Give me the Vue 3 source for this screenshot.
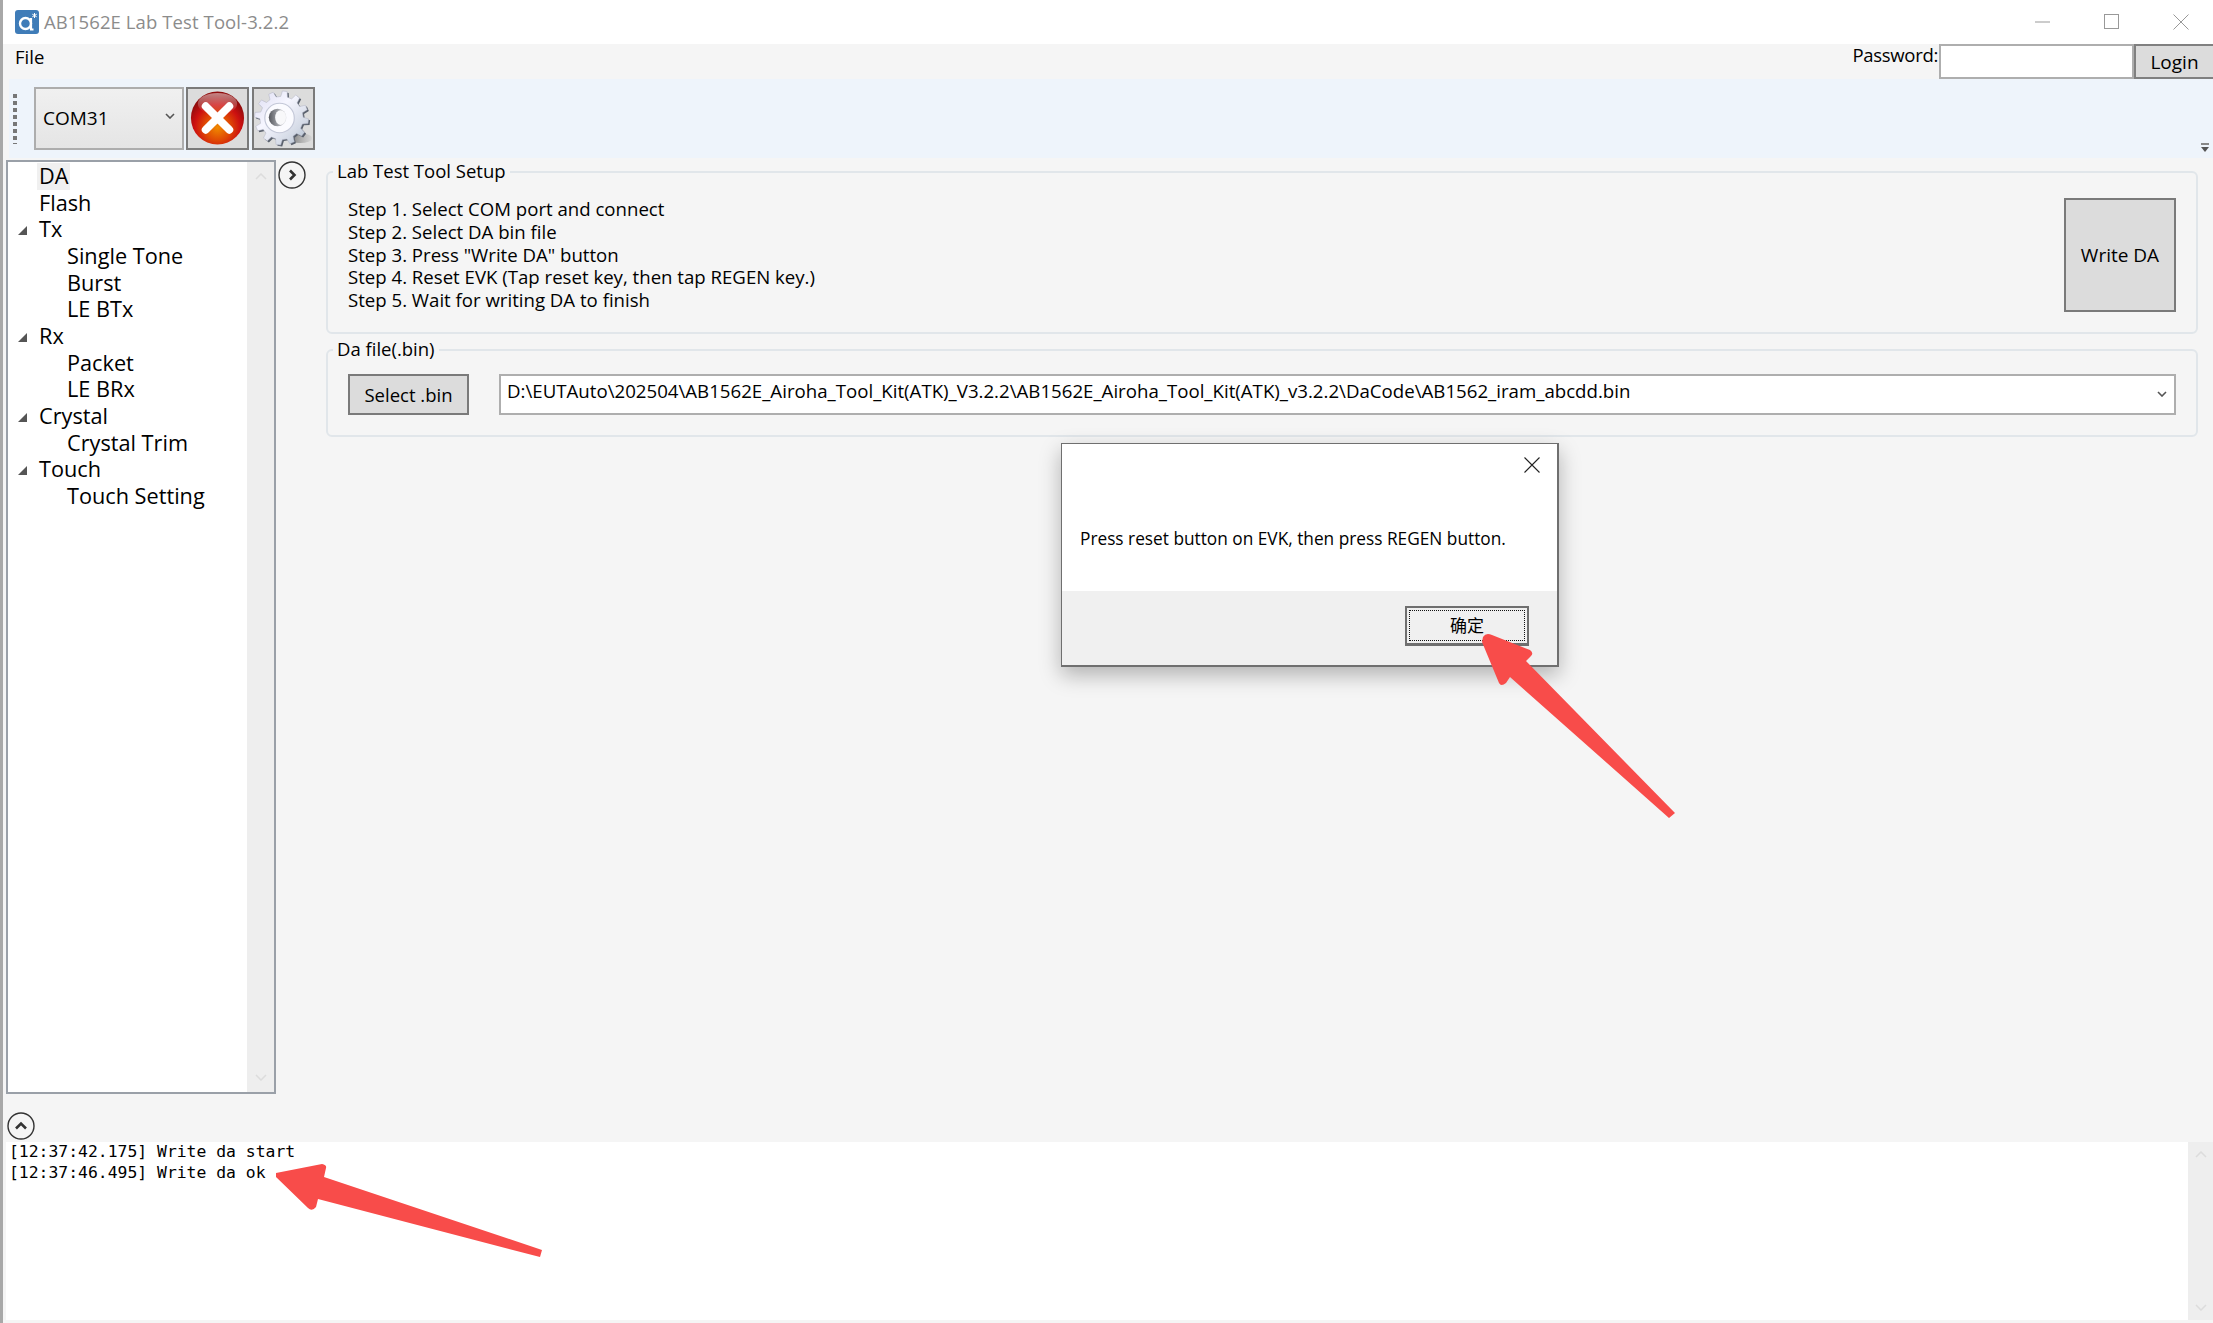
<template>
  <div class="window">
    <div class="titlebar">
      <svg class="app-icon" viewBox="0 0 24 24">
        <rect width="24" height="24" rx="3" fill="#3f7cb8" />
        <circle cx="10.5" cy="13.5" r="5.5" fill="none" stroke="#fff" stroke-width="2.4" />
        <path d="M16 8v11.5h2.5" fill="none" stroke="#fff" stroke-width="2.2" />
        <path d="M19.5 3v5M17.3 4.2l4.4 2.6M21.7 4.2l-4.4 2.6" stroke="#fff" stroke-width="1" />
      </svg>
      <span class="title">AB1562E Lab Test Tool-3.2.2</span>
      <div class="win-controls">
        <svg viewBox="0 0 16 16"><path d="M0 8h15" stroke="#999" /></svg>
        <svg viewBox="0 0 16 16"><rect x=".5" y=".5" width="14" height="14" fill="none" stroke="#999" /></svg>
        <svg viewBox="0 0 16 16"><path d="M.5.5l15 15M15.5.5l-15 15" stroke="#999" /></svg>
      </div>
    </div>

    <div class="menubar">
      <span class="menu-item">File</span>
      <div class="login">
        <span class="pw-label">Password:</span>
        <div class="pw-input"></div>
        <div class="login-btn">Login</div>
      </div>
    </div>

    <div class="toolbar">
      <div class="grip"></div>
      <div class="com-select">
        <span>COM31</span>
        <svg class="chev" viewBox="0 0 10 6"><path d="M1 1l4 4 4-4" fill="none" stroke="#555" stroke-width="1.6" /></svg>
      </div>
      <div class="tool-btn">
        <svg viewBox="0 0 60 60" width="59" height="59">
          <defs>
            <radialGradient id="redBall" cx="50%" cy="68%" r="60%">
              <stop offset="0" stop-color="#f08a00" />
              <stop offset=".4" stop-color="#e04a04" />
              <stop offset=".72" stop-color="#cc1010" />
              <stop offset="1" stop-color="#8f0c0c" />
            </radialGradient>
            <linearGradient id="ballGloss" x1="0" y1="0" x2="0" y2="1">
              <stop offset="0" stop-color="#fff" stop-opacity=".5" />
              <stop offset="1" stop-color="#fff" stop-opacity="0" />
            </linearGradient>
          </defs>
          <circle cx="30" cy="29.5" r="27" fill="url(#redBall)" />
          <ellipse cx="30" cy="15" rx="20" ry="11" fill="url(#ballGloss)" />
          <path d="M18 17.5l24 24M42 17.5l-24 24" stroke="#fff" stroke-width="8" stroke-linecap="round" />
        </svg>
      </div>
      <div class="tool-btn gear-btn">
        <svg viewBox="0 0 60 60" width="59" height="59">
          <defs>
            <linearGradient id="gearFill" x1="0" y1="0" x2="1" y2="1">
              <stop offset="0" stop-color="#dcdcf2" />
              <stop offset=".4" stop-color="#f6f6ff" />
              <stop offset=".75" stop-color="#d4dae6" />
              <stop offset="1" stop-color="#a4b6c6" />
            </linearGradient>
            <linearGradient id="gearHole" x1="0" y1="0" x2="1" y2="0">
              <stop offset="0" stop-color="#56585e" />
              <stop offset=".55" stop-color="#a4a6ac" />
              <stop offset="1" stop-color="#e4e4e8" />
            </linearGradient>
            <linearGradient id="gearShadow" x1="0" y1="0" x2="1" y2="0">
              <stop offset="0" stop-color="#555" stop-opacity=".8" />
              <stop offset="1" stop-color="#888" stop-opacity=".1" />
            </linearGradient>
          </defs>
          <ellipse cx="47" cy="50" rx="12" ry="5" fill="url(#gearShadow)" />
          <polygon :points="gearPoints" fill="#59606c" transform="translate(1.6 1.4)" />
          <polygon :points="gearPoints" fill="url(#gearFill)" stroke="#b0b2c4" stroke-width=".5" />
          <circle cx="26" cy="29.5" r="15" fill="#fbfbff" />
          <circle cx="26" cy="29.5" r="15" fill="none" stroke="#c4c8d8" stroke-width="1.2" />
          <circle cx="24" cy="29" r="9" fill="url(#gearHole)" />
          <ellipse cx="27" cy="29" rx="5.5" ry="7.5" fill="#f8f8fa" />
        </svg>
      </div>
      <svg class="overflow-mark" viewBox="0 0 8 9">
        <path d="M0 0h8v2H0z" fill="#888" />
        <path d="M0 4h8L4 9z" fill="#555" />
      </svg>
    </div>

    <div class="main">
      <div class="tree">
        <div class="tree-list">
          <div
            v-for="item in treeItems"
            :key="item.label"
            class="tree-row"
            :class="{ child: item.child }"
          >
            <span v-if="item.parent" class="tree-arrow"></span>
            <span class="tree-label" :class="{ selected: item.selected }">{{ item.label }}</span>
          </div>
        </div>
        <div class="tree-scroll">
          <svg viewBox="0 0 12 7"><path d="M1 6l5-5 5 5" fill="none" stroke="#dcdcdc" stroke-width="1.5" /></svg>
          <svg viewBox="0 0 12 7"><path d="M1 1l5 5 5-5" fill="none" stroke="#dcdcdc" stroke-width="1.5" /></svg>
        </div>
      </div>

      <div class="round-btn side-toggle">
        <svg viewBox="0 0 28 28">
          <circle cx="14" cy="14" r="13" fill="none" stroke="#333" stroke-width="1.4" />
          <path d="M12 9.5l4.5 4.5-4.5 4.5" fill="none" stroke="#333" stroke-width="2.6" />
        </svg>
      </div>

      <div class="panel">
        <fieldset class="group setup">
          <legend>Lab Test Tool Setup</legend>
          <div class="setup-body">
            <div class="steps">
              <div v-for="s in steps" :key="s">{{ s }}</div>
            </div>
            <div class="write-btn">Write DA</div>
          </div>
        </fieldset>
        <fieldset class="group file">
          <legend>Da file(.bin)</legend>
          <div class="file-body">
            <div class="select-btn">Select .bin</div>
            <div class="path-box">
              <span>D:\EUTAuto\202504\AB1562E_Airoha_Tool_Kit(ATK)_V3.2.2\AB1562E_Airoha_Tool_Kit(ATK)_v3.2.2\DaCode\AB1562_iram_abcdd.bin</span>
              <svg class="chev" viewBox="0 0 10 6"><path d="M1 1l4 4 4-4" fill="none" stroke="#555" stroke-width="1.6" /></svg>
            </div>
          </div>
        </fieldset>
      </div>
    </div>

    <div class="log-toggle">
      <div class="round-btn">
        <svg viewBox="0 0 28 28">
          <circle cx="14" cy="14" r="13" fill="none" stroke="#333" stroke-width="1.4" />
          <path d="M9 16.5l5-5 5 5" fill="none" stroke="#333" stroke-width="2.6" />
        </svg>
      </div>
    </div>

    <div class="log">
      <div class="log-text">
        <div>[12:37:42.175] Write da start</div>
        <div>[12:37:46.495] Write da ok</div>
      </div>
      <div class="log-scroll">
        <svg viewBox="0 0 12 7"><path d="M1 6l5-5 5 5" fill="none" stroke="#dcdcdc" stroke-width="1.5" /></svg>
        <svg viewBox="0 0 12 7"><path d="M1 1l5 5 5-5" fill="none" stroke="#dcdcdc" stroke-width="1.5" /></svg>
      </div>
    </div>

    <div class="dialog">
      <div class="dialog-top">
        <svg class="dialog-close" viewBox="0 0 16 16"><path d="M.5.5l15 15M15.5.5l-15 15" stroke="#222" stroke-width="1.1" /></svg>
        <div class="dialog-msg">Press reset button on EVK, then press REGEN button.</div>
      </div>
      <div class="dialog-foot">
        <div class="ok-btn"><span class="ok-inner">确定</span></div>
      </div>
    </div>

    <svg class="arrows" viewBox="0 0 2213 1323">
      <path d="M1483 637Q1486 632 1492 635L1530 650Q1534 653 1531 656L1526 661L1675 813L1669 818L1510 677L1506 683Q1501 687 1499 683L1482 642Z" fill="#f84c4a" />
      <path d="M276 1173L322 1164Q327 1165 326 1168L324 1177L542 1250L540 1257L318 1199L316 1207Q312 1212 308 1208L276 1177Z" fill="#f84c4a" />
    </svg>
  </div>
</template>

<script setup>
const treeItems = [
  { label: 'DA', selected: true },
  { label: 'Flash' },
  { label: 'Tx', parent: true },
  { label: 'Single Tone', child: true },
  { label: 'Burst', child: true },
  { label: 'LE BTx', child: true },
  { label: 'Rx', parent: true },
  { label: 'Packet', child: true },
  { label: 'LE BRx', child: true },
  { label: 'Crystal', parent: true },
  { label: 'Crystal Trim', child: true },
  { label: 'Touch', parent: true },
  { label: 'Touch Setting', child: true }
]

const steps = [
  'Step 1. Select COM port and connect',
  'Step 2. Select DA bin file',
  'Step 3. Press "Write DA" button',
  'Step 4. Reset EVK (Tap reset key, then tap REGEN key.)',
  'Step 5. Wait for writing DA to finish'
]

// 12 teeth, each one a flat-topped trapezoid round the hub
const gearPoints = (() => {
  const pts = []
  const teeth = 12
  for (let i = 0; i < teeth; i++) {
    const step = (Math.PI * 2) / teeth
    const a = i * step + 0.12
    const corners = [
      [22, a - step * 0.3],
      [27.5, a - step * 0.17],
      [27.5, a + step * 0.17],
      [22, a + step * 0.3]
    ]
    for (const [r, t] of corners) {
      pts.push(`${(28 + r * Math.cos(t)).toFixed(1)},${(29.5 + r * Math.sin(t)).toFixed(1)}`)
    }
  }
  return pts.join(' ')
})()
</script>

<style scoped>
.window {
  position: relative;
  width: 2213px;
  height: 1323px;
  overflow: hidden;
  background: #f5f5f5;
  color: #000;
  font-family: "Open Sans", "Noto Sans CJK SC", sans-serif;
  font-size: 19px;
  box-sizing: border-box;
  border-left: 3px solid #a8a8a8;
  display: flex;
  flex-direction: column;
}

.titlebar {
  height: 44px;
  flex: none;
  background: #fff;
  display: flex;
  align-items: center;
  padding-left: 12px;
}

.app-icon {
  width: 24px;
  height: 24px;
  margin-right: 5px;
}

.title {
  color: #8c8c8c;
  font-size: 18.5px;
  letter-spacing: 0.1px;
  margin-top: -2px;
}

.win-controls {
  margin-left: auto;
  display: flex;
  gap: 53px;
  padding-right: 24px;
  margin-top: -1px;
}

.win-controls svg {
  width: 16px;
  height: 16px;
  display: block;
}

.menubar {
  height: 35px;
  flex: none;
  display: flex;
  align-items: center;
  padding-left: 12px;
}

.menu-item {
  font-size: 18.5px;
  margin-top: -10px;
}

.login {
  margin-left: auto;
  display: flex;
  height: 35px;
}

.pw-label {
  font-size: 18.5px;
  line-height: 22px;
  margin-right: 1px;
  letter-spacing: -0.3px;
}

.pw-input {
  width: 195px;
  box-sizing: border-box;
  background: #fff;
  border: 2px solid #aeaeae;
}

.login-btn {
  width: 79px;
  box-sizing: border-box;
  background: #dcdcdc;
  border: 2px solid #808080;
  border-right: none;
  display: flex;
  align-items: center;
  justify-content: center;
  padding-top: 1px;
  font-size: 19px;
}

.toolbar {
  height: 79px;
  flex: none;
  margin-left: 6px;
  background: #eef4fb;
  display: flex;
  align-items: center;
  position: relative;
  padding-left: 4px;
}

.grip {
  width: 4px;
  height: 50px;
  margin-right: 17px;
  background: repeating-linear-gradient(to bottom, #777 0 4px, transparent 4px 7px);
}

.com-select {
  width: 150px;
  height: 63px;
  box-sizing: border-box;
  border: 2px solid #adadad;
  background: linear-gradient(#f0f0f0, #e5e5e5);
  display: flex;
  align-items: center;
  padding: 0 0 2px 7px;
  margin-right: 2px;
  font-size: 19px;
}

.chev {
  width: 10px;
  height: 6px;
  flex: none;
  margin-left: auto;
}

.com-select .chev {
  margin-right: 7px;
  margin-top: -4px;
}

.tool-btn {
  width: 63px;
  height: 63px;
  box-sizing: border-box;
  background: #dcdcdc;
  border: 2px solid #7a7a7a;
  display: flex;
  align-items: center;
  justify-content: center;
}

.gear-btn {
  margin-left: 3px;
}

.overflow-mark {
  position: absolute;
  right: 4px;
  bottom: 6px;
  width: 8px;
  height: 9px;
}

.main {
  display: flex;
  height: 934px;
  flex: none;
  margin-top: 2px;
  padding-left: 3px;
}

.tree {
  width: 270px;
  height: 934px;
  flex: none;
  box-sizing: border-box;
  background: #fff;
  border: 2px solid #9aa0a8;
  display: flex;
}

.tree-list {
  flex: 1;
  padding-top: 1px;
  font-size: 21.7px;
}

.tree-row {
  position: relative;
  height: 26.67px;
  line-height: 26.67px;
  padding-left: 29px;
  white-space: nowrap;
}

.tree-row.child {
  padding-left: 57px;
}

.tree-label {
  display: inline-block;
  padding: 0 2px;
}

.tree-label.selected {
  background: #f0f0f0;
}

.tree-arrow {
  position: absolute;
  left: 10px;
  top: 10px;
  width: 0;
  height: 0;
  border-left: 9px solid transparent;
  border-bottom: 9px solid #555;
}

.tree-scroll,
.log-scroll {
  flex: none;
  background: #eee;
  display: flex;
  flex-direction: column;
  justify-content: space-between;
  align-items: center;
  padding: 11px 0;
  box-sizing: border-box;
}

.tree-scroll {
  width: 27px;
}

.log-scroll {
  width: 25px;
  height: 100%;
  padding: 9px 0;
}

.tree-scroll svg,
.log-scroll svg {
  width: 12px;
  height: 7px;
}

.round-btn svg {
  width: 28px;
  height: 28px;
  display: block;
}

.side-toggle {
  margin: 1px 0 0 2px;
  flex: none;
}

.panel {
  width: 1872px;
  margin-left: 20px;
  flex: none;
  display: flex;
  flex-direction: column;
}

.group {
  margin: 0;
  padding: 0;
  border: 2px solid #e1e6ea;
  border-radius: 6px;
  min-width: 0;
}

.group legend {
  margin-left: 5px;
  padding: 0 4px;
  font-size: 18.5px;
  line-height: 26px;
  position: relative;
  top: -1px;
}

.setup {
  height: 175px;
  box-sizing: border-box;
  margin-top: -1px;
}

.setup-body {
  display: flex;
  justify-content: space-between;
  padding: 13px 20px 0 20px;
}

.steps {
  line-height: 22.8px;
  font-size: 18.62px;
  padding-top: 0;
}

.write-btn {
  width: 112px;
  height: 114px;
  box-sizing: border-box;
  background: #dcdcdc;
  border: 2px solid #7a7a7a;
  display: flex;
  align-items: center;
  justify-content: center;
  font-size: 19px;
}

.file {
  height: 100px;
  box-sizing: border-box;
  margin-top: 3px;
}

.file-body {
  display: flex;
  gap: 30px;
  padding: 11px 20px 0 20px;
}

.select-btn {
  width: 121px;
  height: 41px;
  flex: none;
  box-sizing: border-box;
  background: #dcdcdc;
  border: 2px solid #7a7a7a;
  display: flex;
  align-items: center;
  justify-content: center;
  font-size: 18.5px;
}

.path-box {
  flex: 1;
  height: 41px;
  box-sizing: border-box;
  background: #fff;
  border: 2px solid #aeaeae;
  display: flex;
  align-items: center;
  padding: 0 7px 8px 6px;
  font-size: 18.67px;
  white-space: nowrap;
}

.path-box .chev {
  margin-top: 6px;
}

.log-toggle {
  flex: none;
  height: 48px;
  padding: 18px 0 0 4px;
  box-sizing: border-box;
}

.log {
  height: 178px;
  flex: none;
  margin-left: 3px;
  display: flex;
  background: #fff;
}

.log-text {
  flex: 1;
  padding: 0 0 0 3px;
  font-family: "DejaVu Sans Mono", "Liberation Mono", monospace;
  font-size: 16.4px;
  line-height: 21px;
  margin-top: -1px;
}

.dialog {
  position: absolute;
  left: 1058px;
  top: 443px;
  width: 498px;
  height: 224px;
  box-sizing: border-box;
  border: 2px solid #6f6f6f;
  border-width: 1px 2px 2px 1px;
  background: #f0f0f0;
  box-shadow: 0 8px 20px rgba(0, 0, 0, 0.28);
  display: flex;
  flex-direction: column;
}

.dialog-top {
  position: relative;
  height: 147px;
  flex: none;
  background: #fff;
  display: flex;
  align-items: center;
  padding: 0 18px;
  box-sizing: border-box;
}

.dialog-close {
  position: absolute;
  right: 17px;
  top: 13px;
  width: 16px;
  height: 16px;
}

.dialog-msg {
  font-size: 17.27px;
  margin-top: 42px;
  white-space: nowrap;
}

.dialog-foot {
  flex: 1;
  display: flex;
  justify-content: flex-end;
  align-items: flex-start;
  padding: 15px 28px 0 0;
}

.ok-btn {
  width: 124px;
  height: 40px;
  box-sizing: border-box;
  border: 2px solid #6f6f6f;
  border-bottom-width: 3px;
  background: #f0f0f0;
  padding: 2px;
}

.ok-inner {
  display: flex;
  align-items: center;
  justify-content: center;
  height: 100%;
  box-sizing: border-box;
  border: 1px dotted #111;
  font-size: 17px;
  padding-bottom: 2px;
}

.arrows {
  position: absolute;
  left: -3px;
  top: 0;
  width: 2213px;
  height: 1323px;
  pointer-events: none;
}
</style>
